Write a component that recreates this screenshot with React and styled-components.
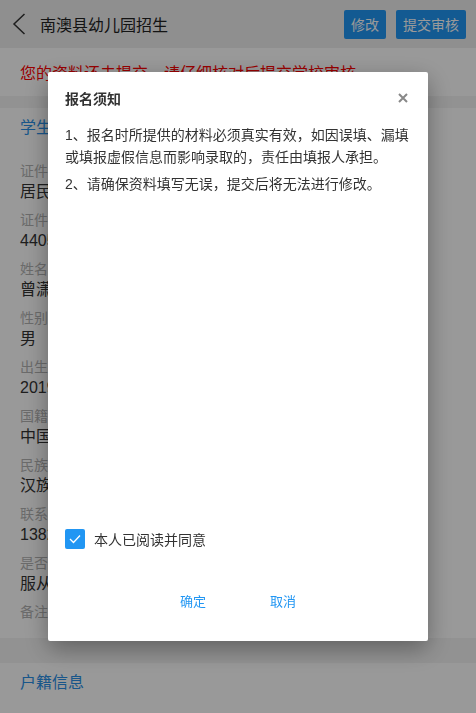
import React, { useState } from 'react'
import styled, { createGlobalStyle } from 'styled-components'

const GlobalStyle = createGlobalStyle`
  html, body {
    margin: 0;
    padding: 0;
    background: #f4f4f4;
    font-family: "Liberation Sans", "Noto Sans CJK SC", sans-serif;
  }
  * { box-sizing: border-box; }
`

const Page = styled.div`
  min-height: 713px;
  display: flex;
  flex-direction: column;
  background: #f4f4f4;
`

const Header = styled.div`
  height: 48px;
  display: flex;
  align-items: center;
  padding: 0 10px 0 12px;
  background: #efefef;
`

const BackBtn = styled.div`
  width: 16px;
  height: 22px;
  display: flex;
  align-items: center;
  color: #333;
`

const Title = styled.h1`
  flex: 1;
  margin: 0 0 0 12px;
  font-size: 16px;
  font-weight: normal;
  color: #222;
`

const TopButton = styled.button`
  height: 29px;
  padding: 0 7px;
  margin-left: 10px;
  border: none;
  border-radius: 2px;
  background: #2196f3;
  color: #fff;
  font-size: 14px;
  font-family: inherit;
`

const Notice = styled.div`
  height: 48px;
  display: flex;
  align-items: center;
  padding: 0 20px;
  background: #fff;
  color: #ff0000;
  font-size: 16px;
  margin-bottom: 12px;
`

const Section = styled.div`
  background: #fff;
  padding: 0 20px ${p => p.$bottom || 0}px;
  margin-bottom: ${p => p.$gap || 0}px;
  flex: ${p => (p.$fill ? 1 : 'none')};
`

const SectionTitle = styled.div`
  height: 40px;
  line-height: 40px;
  font-size: 16px;
  color: #2a8fe6;
  margin-bottom: 13px;
`

const Field = styled.div`
  height: 49px;
  display: flex;
  flex-direction: column;
`

const Label = styled.div`
  height: 20px;
  line-height: 20px;
  font-size: 14px;
  color: #b3b3b3;
`

const Value = styled.div`
  height: 22px;
  line-height: 22px;
  font-size: 16px;
  color: #333;
`

const Overlay = styled.div`
  position: fixed;
  inset: 0;
  background: rgba(0, 0, 0, 0.4);
  display: flex;
  align-items: center;
  justify-content: center;
`

const Dialog = styled.div`
  width: 380px;
  height: 569px;
  background: #fff;
  border-radius: 2px;
  box-shadow: 0 8px 24px rgba(0, 0, 0, 0.35);
  display: flex;
  flex-direction: column;
`

const DialogHead = styled.div`
  height: 52px;
  display: flex;
  align-items: center;
  justify-content: space-between;
  padding: 0 19px 0 17px;
`

const DialogTitle = styled.div`
  font-size: 14px;
  font-weight: bold;
  color: #333;
`

const Close = styled.div`
  width: 12px;
  height: 12px;
  display: flex;
  color: #888;
`

const DialogBody = styled.div`
  flex: 1;
  padding: 0 16px 0 17px;
`

const Para = styled.p`
  margin: 0 0 5px;
  font-size: 14px;
  line-height: 22px;
  color: #333;
`

const AgreeRow = styled.label`
  display: flex;
  align-items: center;
  gap: 9px;
  padding: 0 17px;
  margin-bottom: 30px;
  font-size: 14px;
  color: #333;
`

const Check = styled.span`
  width: 20px;
  height: 20px;
  border-radius: 2px;
  background: ${p => (p.$on ? '#2196f3' : '#fff')};
  border: ${p => (p.$on ? 'none' : '1px solid #ccc')};
  display: flex;
  align-items: center;
  justify-content: center;
`

const Footer = styled.div`
  display: flex;
  justify-content: center;
  padding-bottom: 20px;
`

const FootButton = styled.button`
  width: 90px;
  height: 42px;
  border: none;
  background: none;
  color: #2196f3;
  font-size: 13px;
  font-family: inherit;
`

const fields = [
  ['证件类型', '居民身份证'],
  ['证件号码', '440523201906150031'],
  ['姓名', '曾潇然'],
  ['性别', '男'],
  ['出生日期', '2019-06-15'],
  ['国籍', '中国'],
  ['民族', '汉族'],
  ['联系电话', '13825410876'],
  ['是否服从调剂', '服从'],
]

const App = () => {
  const [agree, setAgree] = useState(true)

  return (
    <>
      <GlobalStyle />
      <Page>
        <Header>
          <BackBtn>
            <svg width="14" height="22" viewBox="0 0 14 22" fill="none">
              <path d="M12.5 1 L2 11 L12.5 21" stroke="#333" strokeWidth="1.5" />
            </svg>
          </BackBtn>
          <Title>南澳县幼儿园招生</Title>
          <TopButton>修改</TopButton>
          <TopButton>提交审核</TopButton>
        </Header>
        <Notice>您的资料还未提交，请仔细核对后提交学校审核</Notice>
        <Section $bottom={16} $gap={25}>
          <SectionTitle>学生信息</SectionTitle>
          {fields.map(([k, v]) => (
            <Field key={k}>
              <Label>{k}</Label>
              <Value>{v}</Value>
            </Field>
          ))}
          <Label>备注</Label>
        </Section>
        <Section $fill>
          <SectionTitle>户籍信息</SectionTitle>
        </Section>
      </Page>

      <Overlay>
        <Dialog>
          <DialogHead>
            <DialogTitle>报名须知</DialogTitle>
            <Close>
              <svg width="12" height="12" viewBox="0 0 12 12">
                <path d="M2 2 L10 10 M10 2 L2 10" stroke="currentColor" strokeWidth="2" />
              </svg>
            </Close>
          </DialogHead>
          <DialogBody>
            <Para>1、报名时所提供的材料必须真实有效，如因误填、漏填或填报虚假信息而影响录取的，责任由填报人承担。</Para>
            <Para>2、请确保资料填写无误，提交后将无法进行修改。</Para>
          </DialogBody>
          <AgreeRow onClick={() => setAgree(!agree)}>
            <Check $on={agree}>
              {agree && (
                <svg width="12" height="10" viewBox="0 0 12 10" fill="none">
                  <path d="M1 5 L4.5 8.5 L11 1.5" stroke="#fff" strokeWidth="1.3" />
                </svg>
              )}
            </Check>
            本人已阅读并同意
          </AgreeRow>
          <Footer>
            <FootButton>确定</FootButton>
            <FootButton>取消</FootButton>
          </Footer>
        </Dialog>
      </Overlay>
    </>
  )
}

export default App
